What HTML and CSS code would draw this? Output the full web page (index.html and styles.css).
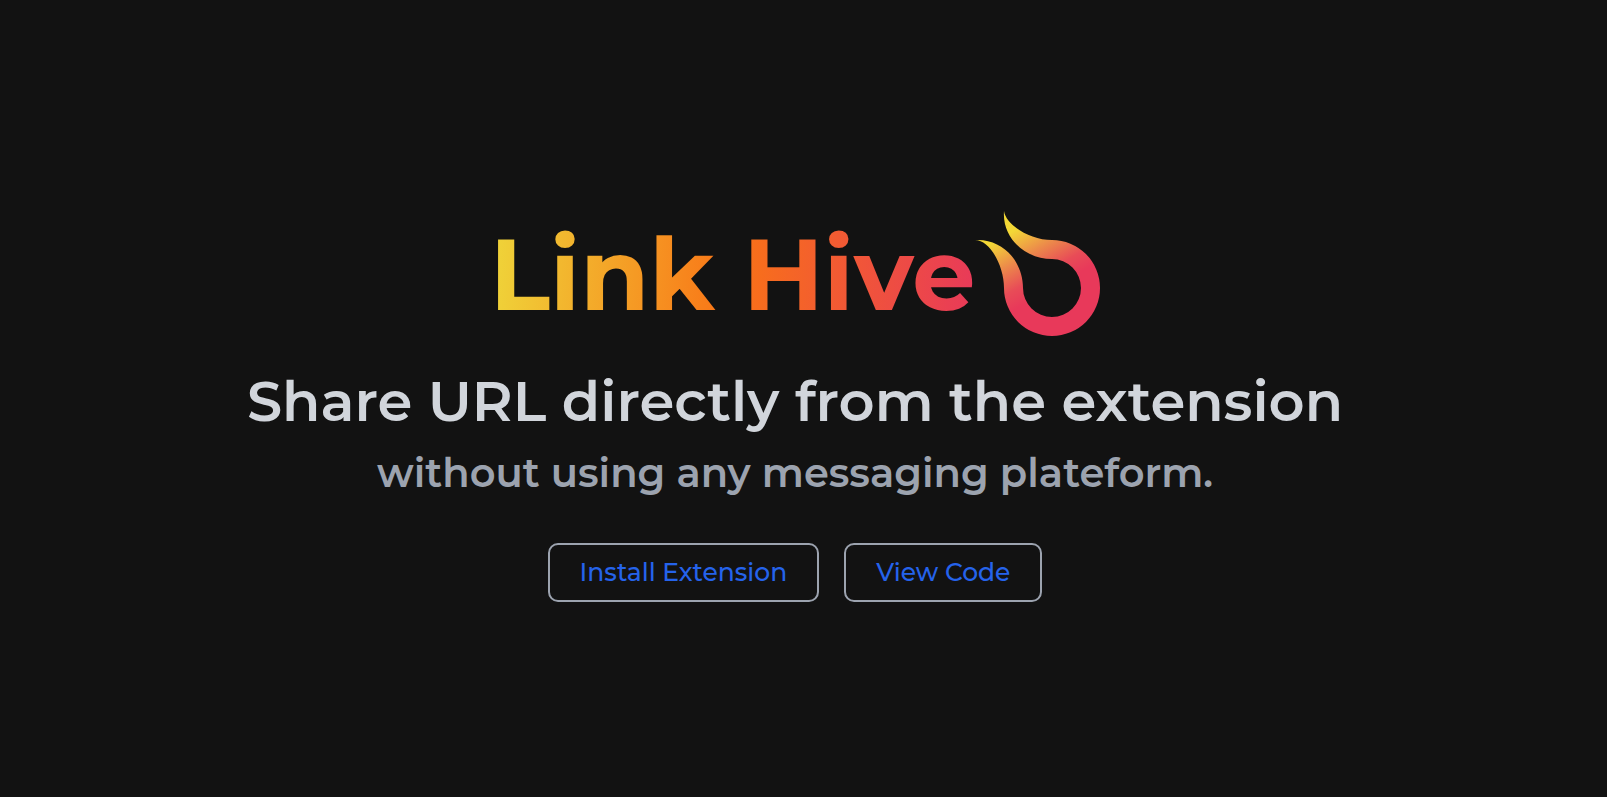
FILE: index.html
```html
<!DOCTYPE html>
<html lang="en">
<head>
<meta charset="utf-8">
<meta name="viewport" content="width=device-width, initial-scale=1">
<title>Link Hive</title>
<link rel="stylesheet" href="styles.css">
</head>
<body>
<main class="hero">
  <div class="brand">
    <h1 class="brand-name">Link Hive</h1>
    <svg class="brand-mark" viewBox="0 0 125 125" aria-hidden="true">
      <defs>
        <linearGradient id="flame" gradientUnits="userSpaceOnUse" x1="24" y1="28" x2="58" y2="88">
          <stop offset="0" stop-color="#f3d836"/>
          <stop offset="0.4" stop-color="#ec8b4a"/>
          <stop offset="0.75" stop-color="#e84c57"/>
          <stop offset="1" stop-color="#e8395a"/>
        </linearGradient>
      </defs>
      <path fill="url(#flame)" d="M29 0C31 14 55 29 77 29A48 48 0 1 1 29 77C29 55 15 29 0 29C27 27 48 50 48 77A29 29 0 1 0 77 48C50 48 27 27 29 0Z"/>
    </svg>
  </div>
  <h2 class="tagline">Share URL directly from the extension</h2>
  <p class="subline">without using any messaging plateform.</p>
  <div class="actions">
    <a class="action" href="#install">Install Extension</a>
    <a class="action" href="#code">View Code</a>
  </div>
</main>
</body>
</html>
```
FILE: styles.css
```css
* { box-sizing: border-box; }

body {
  margin: 0;
  background: #121212;
  font-family: Montserrat, Inter, "Open Sans", sans-serif;
}

.hero {
  min-height: 100vh;
  padding: 14px 17px 0 0;
  display: flex;
  flex-direction: column;
  align-items: center;
  justify-content: center;
}

.brand {
  display: flex;
  align-items: center;
}

.brand-name {
  margin: 0;
  font-size: 100px;
  line-height: 128px;
  font-weight: 700;
  color: transparent;
  background: linear-gradient(94deg, #efd63a, #f97316 50%, #e8395a);
  -webkit-background-clip: text;
  background-clip: text;
}

.brand-mark {
  width: 125px;
  height: 125px;
}

.tagline {
  margin: 27px 0 0;
  font-size: 56px;
  line-height: 72px;
  font-weight: 600;
  color: #d1d5db;
}

.subline {
  margin: 11px 0 0;
  font-size: 40px;
  line-height: 50px;
  font-weight: 600;
  color: #9ca3af;
}

.actions {
  display: flex;
  gap: 25px;
  margin-top: 45px;
}

.action {
  padding: 12px 30px;
  border: 2px solid #9ca3af;
  border-radius: 10px;
  font-size: 25px;
  line-height: 31px;
  font-weight: 500;
  color: #2563eb;
  text-decoration: none;
}
```
